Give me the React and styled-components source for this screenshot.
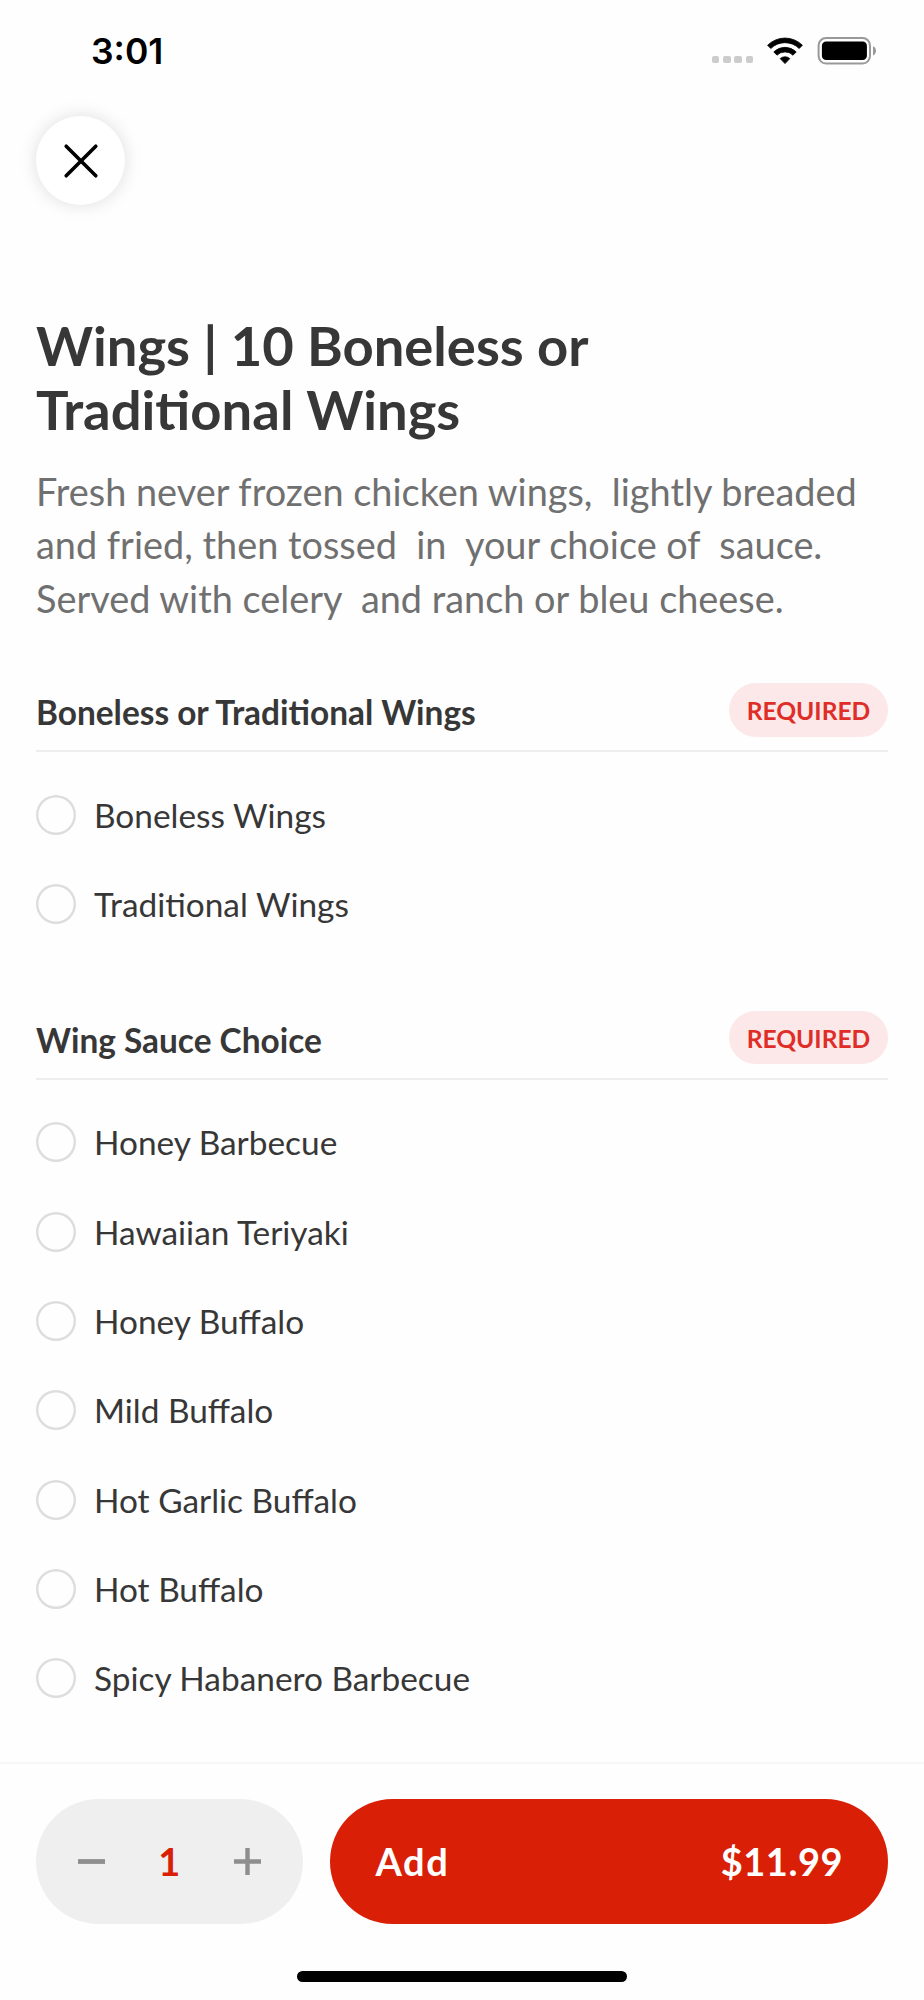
import React, { useState } from 'react';
import styled, { createGlobalStyle } from 'styled-components';

const optionGroups = [
  {
    title: 'Boneless or Traditional Wings',
    options: ['Boneless Wings', 'Traditional Wings'],
  },
  {
    title: 'Wing Sauce Choice',
    options: [
      'Honey Barbecue',
      'Hawaiian Teriyaki',
      'Honey Buffalo',
      'Mild Buffalo',
      'Hot Garlic Buffalo',
      'Hot Buffalo',
      'Spicy Habanero Barbecue',
    ],
  },
];

const PRICE = 11.99;

const WifiIcon = () => (
  <svg width="36" height="28" viewBox="0 0 36 28">
    <path d="M0.6 8.2a24.8 24.8 0 0 1 34.8 0l-3.2 3.3a20.2 20.2 0 0 0-28.4 0z" stroke="#000" strokeWidth="0.8" strokeLinejoin="round" />
    <path d="M6.8 14.9a16 16 0 0 1 22.4 0l-3.2 3.3a11.4 11.4 0 0 0-16 0z" stroke="#000" strokeWidth="0.8" strokeLinejoin="round" />
    <path d="M13.2 21.6a7.2 7.2 0 0 1 9.6 0L18 26.6z" stroke="#000" strokeWidth="0.8" strokeLinejoin="round" />
  </svg>
);

const BatteryIcon = () => (
  <svg width="60" height="28" viewBox="0 0 60 28">
    <rect x="1.6" y="1.1" width="51.4" height="25.4" rx="7.4" fill="none" stroke="#999" strokeWidth="2" />
    <rect x="4.9" y="4.5" width="45" height="18.6" rx="4.2" />
    <path d="M56 9.2c4 1.4 4 7.8 0 9.2z" fill="#999" />
  </svg>
);

const CloseIcon = () => (
  <svg width="36" height="36" viewBox="0 0 36 36" fill="none" stroke="#000" strokeWidth="3.6" strokeLinecap="round">
    <path d="M3.2 3.2l29.6 29.6M32.8 3.2L3.2 32.8" />
  </svg>
);

const MinusIcon = () => (
  <svg width="27" height="27" viewBox="0 0 27 27" stroke="#8e8e8e" strokeWidth="4.8">
    <path d="M0 13.5h27" />
  </svg>
);

const PlusIcon = () => (
  <svg width="27" height="27" viewBox="0 0 27 27" stroke="#8e8e8e" strokeWidth="4.4">
    <path d="M0 13.5h27M13.5 0v27" />
  </svg>
);

const App = () => {
  const [selected, setSelected] = useState({});
  const [quantity, setQuantity] = useState(1);

  return (
    <Screen>
      <GlobalStyle />
      <StatusBar>
        <Time>3:01</Time>
        <StatusIcons>
          <SignalDots>
            <Dot />
            <Dot />
            <Dot />
            <Dot />
          </SignalDots>
          <WifiIcon />
          <BatteryIcon />
        </StatusIcons>
      </StatusBar>

      <Content>
        <CloseButton aria-label="Close">
          <CloseIcon />
        </CloseButton>

        <Title>Wings | 10 Boneless or Traditional Wings</Title>
        <Description>
          {'Fresh never frozen chicken wings,  lightly breaded\nand fried, then tossed  in  your choice of  sauce.\nServed with celery  and ranch or bleu cheese.'}
        </Description>

        {optionGroups.map((group) => (
          <Group key={group.title}>
            <GroupHeader>
              <GroupTitle>{group.title}</GroupTitle>
              <RequiredBadge>REQUIRED</RequiredBadge>
            </GroupHeader>
            <OptionList>
              {group.options.map((option) => (
                <Option
                  key={option}
                  onClick={() => setSelected({ ...selected, [group.title]: option })}
                >
                  <Radio $checked={selected[group.title] === option} />
                  <OptionLabel>{option}</OptionLabel>
                </Option>
              ))}
            </OptionList>
          </Group>
        ))}
      </Content>

      <Footer>
        <Actions>
          <Stepper>
            <StepButton aria-label="Decrease" onClick={() => setQuantity(Math.max(1, quantity - 1))}>
              <MinusIcon />
            </StepButton>
            <Quantity>{quantity}</Quantity>
            <StepButton aria-label="Increase" onClick={() => setQuantity(quantity + 1)}>
              <PlusIcon />
            </StepButton>
          </Stepper>
          <AddButton>
            <AddLabel>Add</AddLabel>
            <Price>${(PRICE * quantity).toFixed(2)}</Price>
          </AddButton>
        </Actions>
        <HomeIndicator />
      </Footer>
    </Screen>
  );
};

// Styled Components
const GlobalStyle = createGlobalStyle`
  * {
    box-sizing: border-box;
  }

  body {
    margin: 0;
    background: #fefefe;
    font-family: Lato, sans-serif;
    color: #373737;
  }

  button {
    border: none;
    padding: 0;
    background: none;
    font-family: inherit;
    cursor: pointer;
  }

  svg {
    display: block;
  }
`;

const Screen = styled.div`
  display: flex;
  flex-direction: column;
  width: 924px;
  height: 2000px;
  overflow: hidden;
`;

const StatusBar = styled.div`
  display: flex;
  justify-content: space-between;
  align-items: center;
  flex-shrink: 0;
  height: 101px;
  padding: 0 47px 0 91px;
`;

const Time = styled.div`
  padding-top: 1px;
  font-family: Inter, sans-serif;
  font-size: 35.5px;
  font-weight: 600;
  color: #000;
`;

const StatusIcons = styled.div`
  display: flex;
  align-items: center;
  gap: 14px;
`;

const SignalDots = styled.div`
  display: flex;
  gap: 3.8px;
  padding-top: 18px;
`;

const Dot = styled.span`
  width: 7.4px;
  height: 7.4px;
  border-radius: 2px;
  background: #ccc;
`;

const Content = styled.main`
  flex: 1;
  min-height: 0;
  overflow: hidden;
  padding: 15px 36px 0;
`;

const CloseButton = styled.button`
  display: flex;
  align-items: center;
  justify-content: center;
  width: 89.3px;
  height: 89.3px;
  border-radius: 50%;
  background: #fff;
  box-shadow: 0 0 18px rgba(0, 0, 0, 0.13);
`;

const Title = styled.h1`
  margin: 108px 0 0;
  max-width: 700px;
  font-size: 54.4px;
  line-height: 64px;
  font-weight: 700;
`;

const Description = styled.p`
  margin: 23.6px 0 0;
  font-size: 37.87px;
  line-height: 53.57px;
  color: #707070;
  white-space: pre;
`;

const Group = styled.section`
  margin-top: 62px;

  ${Description} + & {
    margin-top: 57.6px;
  }
`;

const GroupHeader = styled.div`
  display: flex;
  justify-content: space-between;
  align-items: center;
  padding-bottom: 13.4px;
  border-bottom: 2px solid #eee;
`;

const GroupTitle = styled.h2`
  margin: 0;
  padding-top: 5px;
  font-size: 33.4px;
  line-height: 40px;
  font-weight: 700;
`;

const RequiredBadge = styled.span`
  width: 159px;
  height: 53.6px;
  border-radius: 27px;
  background: #fde8e9;
  color: #df2e27;
  font-size: 24.6px;
  font-weight: 700;
  line-height: 55px;
  text-align: center;
`;

const OptionList = styled.div`
  padding-top: 18px;
`;

const Option = styled.div`
  display: flex;
  align-items: center;
  gap: 18px;
  height: 89.3px;
  cursor: pointer;
`;

const Radio = styled.span`
  width: 40px;
  height: 40px;
  border-radius: 50%;
  box-shadow: inset 0 0 0 ${({ $checked }) => ($checked ? '12px #d91f06' : '2.4px #ddd')};
`;

const OptionLabel = styled.span`
  font-size: 33.4px;
  line-height: 40px;
`;

const Footer = styled.footer`
  flex-shrink: 0;
  height: 238px;
  padding: 35px 36px 0;
  border-top: 2px solid #f7f7f7;
`;

const Actions = styled.div`
  display: flex;
  gap: 27px;
  height: 125px;
`;

const Stepper = styled.div`
  display: flex;
  align-items: center;
  justify-content: space-between;
  width: 267.4px;
  padding: 0 42px;
  border-radius: 63px;
  background: #efefef;
`;

const StepButton = styled.button`
  display: flex;
`;

const Quantity = styled.span`
  padding: 0 1px 1px 0;
  font-size: 38px;
  font-weight: 700;
  color: #d91f06;
`;

const AddButton = styled.button`
  flex: 1;
  display: flex;
  align-items: center;
  justify-content: space-between;
  padding: 0 45px 2px;
  border-radius: 63px;
  background: #d91f06;
  color: #fff;
  font-size: 38px;
  font-weight: 700;
`;

const AddLabel = styled.span`
  letter-spacing: 1.7px;
`;

const Price = styled.span`
  letter-spacing: 0.5px;
`;

const HomeIndicator = styled.div`
  width: 330px;
  height: 11px;
  margin: 47px auto 0;
  border-radius: 6px;
  background: #000;
`;

export default App;
